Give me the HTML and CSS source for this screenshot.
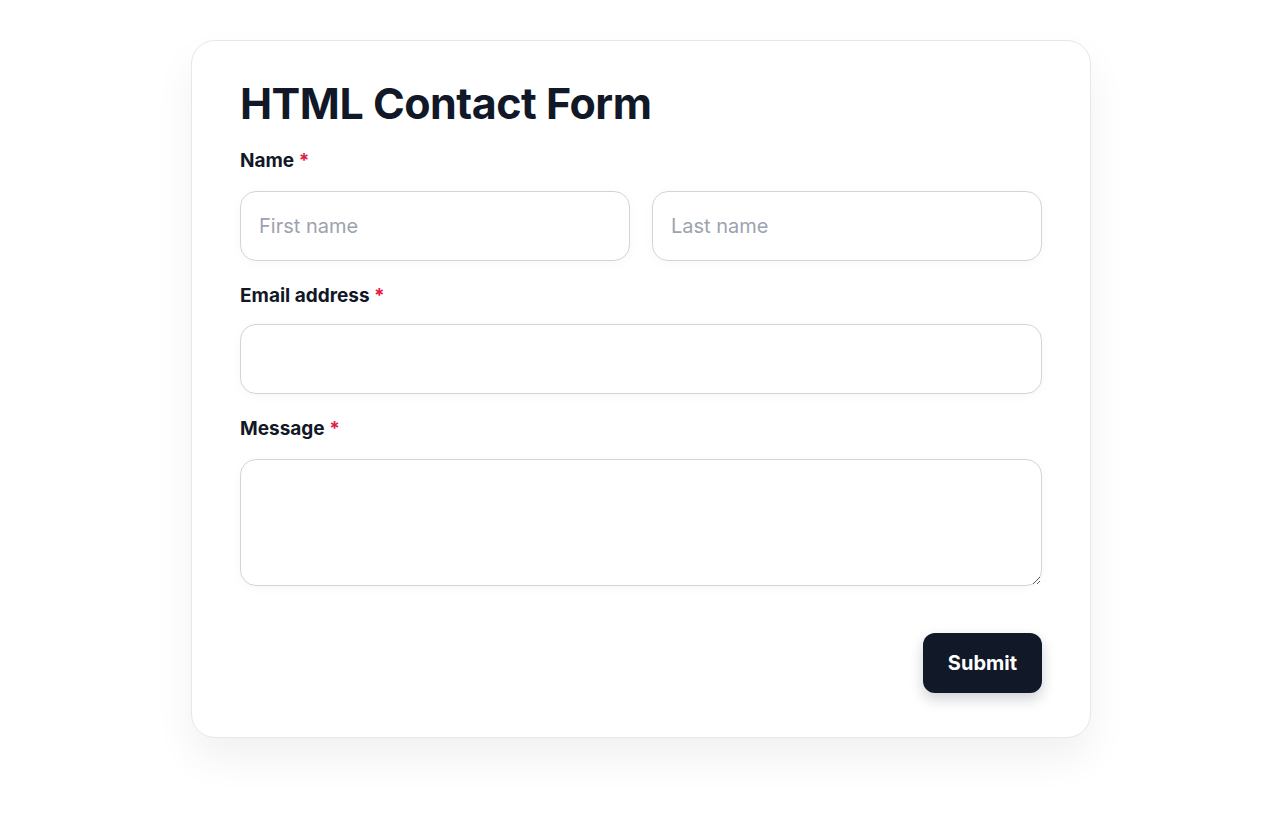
FILE: index.html
```html
<!DOCTYPE html>
<html lang="en">
<head>
  <meta charset="UTF-8">
  <meta name="viewport" content="width=device-width, initial-scale=1.0">
  <title>HTML Contact Form</title>
  <link rel="stylesheet" href="styles.css">
</head>
<body>

  <form class="contact-card" onsubmit="return false">
    <h1 class="contact-title">HTML Contact Form</h1>

    <div class="field">
      <label class="field-label label-name">Name <span class="required">*</span></label>
      <div class="name-row">
        <input type="text" class="field-input" placeholder="First name">
        <input type="text" class="field-input" placeholder="Last name">
      </div>
    </div>

    <div class="field">
      <label class="field-label" for="email">Email address <span class="required">*</span></label>
      <input type="email" id="email" class="field-input">
    </div>

    <div class="field">
      <label class="field-label label-message" for="message">Message <span class="required">*</span></label>
      <textarea id="message" class="field-input field-textarea"></textarea>
    </div>

    <div class="actions">
      <button type="submit" class="submit-button">Submit</button>
    </div>
  </form>

</body>
</html>
```

FILE: styles.css
```css
html {
  background-color: #fff;
}

body {
  margin: 0;
  padding: 40px 0 80px;
  font-family: Inter, "Noto Sans", sans-serif;
  background-color: #fff;
  color: #111827;
}

.contact-card {
  box-sizing: border-box;
  width: 900px;
  margin: 0 0 0 calc(50% - 449px);
  padding: 37px 48px 44px 48px;
  border: 1px solid #e5e7eb;
  border-radius: 24px;
  background-color: #fff;
  box-shadow: 0 20px 40px rgba(17, 24, 39, 0.06);
}

.contact-title {
  margin: 0 0 19px;
  font-size: 43px;
  font-weight: 700;
  line-height: 1.2;
  letter-spacing: -0.5px;
}

.field {
  display: flex;
  flex-direction: column;
  margin-bottom: 23px;
}

.field-label {
  font-size: 19px;
  font-weight: 700;
  line-height: 24px;
  margin-bottom: 16px;
}

.label-name {
  margin-bottom: 18px;
}

.label-message {
  margin-bottom: 18px;
}

.required {
  color: #e11d48;
}

.name-row {
  display: flex;
  gap: 22px;
}

.name-row .field-input {
  flex: 1;
  min-width: 0;
}

.field-input {
  box-sizing: border-box;
  height: 70px;
  padding: 0 18px;
  border: 1px solid #d1d5db;
  border-radius: 16px;
  font-family: inherit;
  font-size: 20px;
  color: #111827;
  background-color: #fff;
  outline: none;
  box-shadow: 0 2px 12px rgba(17, 24, 39, 0.03);
}

.field-input::placeholder {
  color: #9ca3af;
}

.field-textarea {
  height: 127px;
  padding: 14px 18px;
}

.actions {
  display: flex;
  justify-content: flex-end;
  margin-top: 47px;
}

.submit-button {
  height: 60px;
  padding: 0 25px;
  border: none;
  border-radius: 12px;
  background-color: #111827;
  color: #fff;
  font-family: inherit;
  font-size: 20px;
  font-weight: 700;
  cursor: pointer;
  box-shadow: 0 6px 14px rgba(17, 24, 39, 0.2);
}

.submit-button:hover {
  background-color: #1f2937;
}
```
